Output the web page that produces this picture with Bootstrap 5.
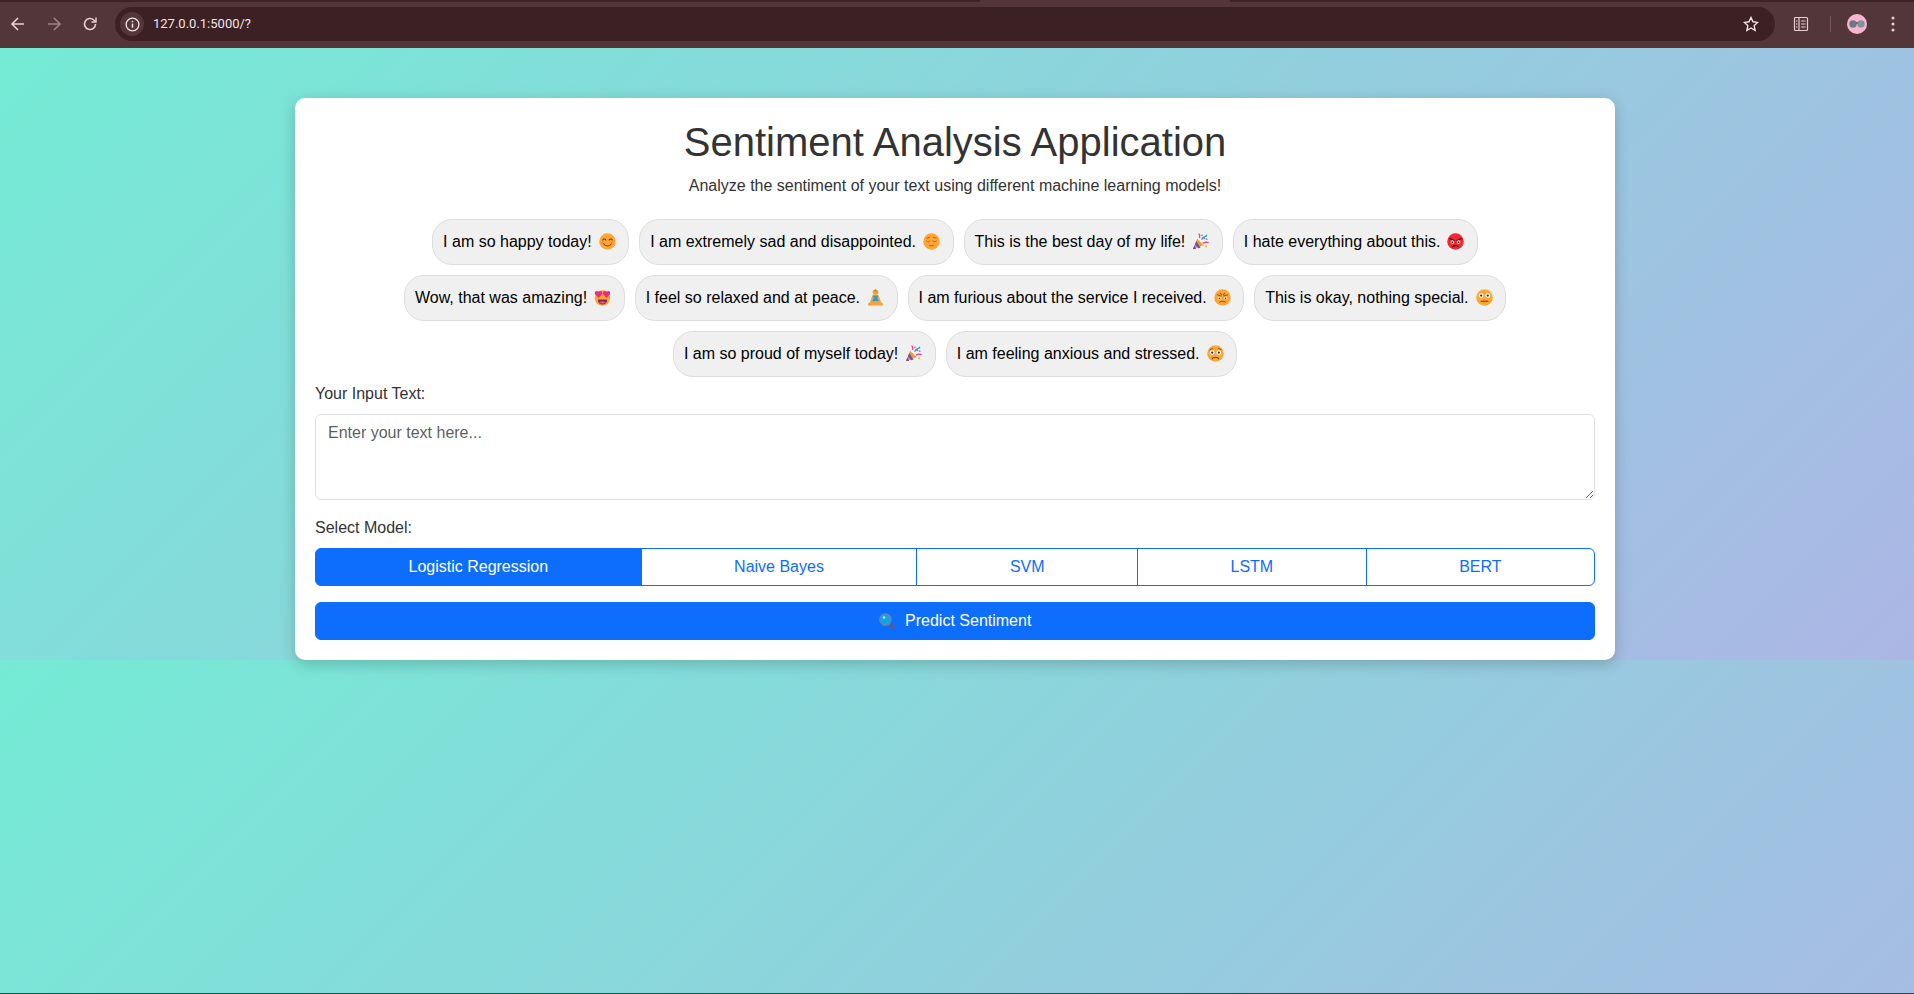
<!DOCTYPE html>
<html lang="en">
<head>
    <meta charset="UTF-8">
    <meta name="viewport" content="width=device-width, initial-scale=1.0">
    <title>Sentiment Analysis Application</title>
    <link href="https://cdn.jsdelivr.net/npm/bootstrap@5.3.0/dist/css/bootstrap.min.css" rel="stylesheet">
    <style>
        html, body {
            height: 100%;
        }
        body {
            font-family: "Liberation Sans", Arial, sans-serif;
            color: #333;
            overflow: hidden;
        }
        /* browser bar */
        .chrome-top {
            height: 2px;
            background-color: #3c2327;
        }
        .chrome-top-tab {
            width: 250px;
            height: 2px;
            margin-left: 980px;
            background-color: #533639;
        }
        .chrome-bar {
            height: 46px;
            padding: 0 3px 2px 0;
            background-color: #533639;
            color: #e8cfd2;
        }
        .chrome-btn {
            width: 36px;
            height: 36px;
        }
        .url-pill {
            height: 34px;
            padding-left: 5px;
            margin-left: 7px;
            border-radius: 17px;
            background-color: #3b2024;
            color: #f3e3e4;
            font-family: Roboto, "Liberation Sans", sans-serif;
            font-size: 13px;
        }
        .url-info {
            width: 24px;
            height: 24px;
            margin-right: 9px;
            border-radius: 50%;
            background-color: #533639;
        }
        .chrome-sep {
            width: 1px;
            height: 16px;
            margin: 0 16px 0 11px;
            background-color: #75595c;
        }
        /* page */
        .page-area {
            padding: 50px 4px 0 0;
            background: linear-gradient(135deg, #74ebd5, #acb6e5);
            background-size: 100% 612px;
        }
        .main-box {
            width: 1320px;
            padding: 20px;
            border-radius: 10px;
            background-color: #fff;
            box-shadow: 0 4px 15px rgba(0, 0, 0, 0.2);
        }
        .main-box h1 {
            font-size: 40px;
            line-height: 48px;
            color: #333;
        }
        .sample-chip {
            margin: 5px;
            padding: 10px;
            border: 1px solid #ddd;
            border-radius: 20px;
            background-color: #f0f0f0;
            color: #000;
            font-size: 16px;
            line-height: 24px;
        }
        .emo {
            width: 17px;
            height: 17px;
            margin: 0 2.5px 0 7px;
            vertical-align: -3px;
        }
        .btn-group .btn {
            font-size: 16px;
        }
        .search-emo {
            margin-right: 6px;
        }
        .page-end {
            height: 1px;
            background-color: #2d4444;
        }
    </style>
</head>
<body class="d-flex flex-column">

<svg width="0" height="0" class="d-block">
    <defs>
        <symbol id="e-smile" viewBox="0 0 36 36">
            <circle cx="18" cy="18" r="17.500" fill="#ffa632"/>
            <circle cx="7.500" cy="20" r="3.200" fill="#f98a5a"/>
            <circle cx="28.500" cy="20" r="3.200" fill="#f98a5a"/>
            <path d="M8 15c1.500-3 5-3 6.500 0M21.500 15c1.500-3 5-3 6.500 0M10 23c3 6 13 6 16 0" fill="none" stroke="#5a3a1c" stroke-width="2.200" stroke-linecap="round"/>
        </symbol>
        <symbol id="e-pensive" viewBox="0 0 36 36">
            <circle cx="18" cy="18" r="17.500" fill="#ffa632"/>
            <path d="M8 11l6-2M28 11l-6-2M8 17c2 2 5 2 7 0M21 17c2 2 5 2 7 0M14 27h8" fill="none" stroke="#a0662a" stroke-width="2" stroke-linecap="round"/>
        </symbol>
        <symbol id="e-party" viewBox="0 0 36 36">
            <path d="M2 34l9-22 14 14z" fill="#e2a13a"/>
            <path d="M5 26l4 8-7 0zM9 17l9 14-5 1.500-7-8z" fill="#7b4fa8"/>
            <path d="M21 13c3-5 7-4 10-8" fill="none" stroke="#18a0de" stroke-width="3" stroke-linecap="round"/>
            <path d="M24 21c3-2 6-2 10-1" fill="none" stroke="#ef4a8a" stroke-width="3" stroke-linecap="round"/>
            <path d="M16 9c1-3 0-5-1-7" fill="none" stroke="#ef4a8a" stroke-width="3" stroke-linecap="round"/>
            <circle cx="26" cy="11" r="2" fill="#ef4a8a"/>
            <circle cx="31" cy="13" r="2" fill="#3fb6c9"/>
            <circle cx="21" cy="5" r="2" fill="#3fb6c9"/>
            <circle cx="30" cy="28" r="2" fill="#f7b500"/>
        </symbol>
        <symbol id="e-angry" viewBox="0 0 36 36">
            <circle cx="18" cy="18" r="17.500" fill="#f2282e"/>
            <path d="M6 12l9 4M30 12l-9 4" stroke="#4a1012" stroke-width="3" stroke-linecap="round"/>
            <circle cx="11.500" cy="19" r="3.500" fill="#fff"/>
            <circle cx="24.500" cy="19" r="3.500" fill="#fff"/>
            <circle cx="11.500" cy="19.500" r="1.800" fill="#2d0c0e"/>
            <circle cx="24.500" cy="19.500" r="1.800" fill="#2d0c0e"/>
            <path d="M12 29c3-3 9-3 12 0" fill="none" stroke="#4a1012" stroke-width="2.500" stroke-linecap="round"/>
        </symbol>
        <symbol id="e-hearts" viewBox="0 0 36 36">
            <circle cx="18" cy="19" r="16.500" fill="#ffa632"/>
            <path d="M8 22h20c0 7-4 11-10 11s-10-4-10-11z" fill="#7c2a6c"/>
            <path d="M11 28c4-2 10-2 14 0-2 3.500-12 3.500-14 0z" fill="#f0567f"/>
            <path d="M9.500 19L2 10.500C0 6 5 1.500 9.500 6 14 1.500 19 6 17 10.500z" fill="#f0288c"/>
            <path d="M26.500 19L19 10.500C17 6 22 1.500 26.500 6 31 1.500 36 6 34 10.500z" fill="#f0288c"/>
        </symbol>
        <symbol id="e-lotus" viewBox="0 0 36 36">
            <circle cx="18" cy="7" r="6" fill="#f2a53c"/>
            <path d="M18 1c-2 0-3 2-3 4h6c0-2-1-4-3-4z" fill="#c57b1f"/>
            <path d="M12 13h12l2 14H10z" fill="#2f9fd0"/>
            <path d="M12 13c-3 5-4 11-6 15l4 1 4-10zM24 13c3 5 4 11 6 15l-4 1-4-10z" fill="#f2a53c"/>
            <path d="M2 33c0-4 6-7 16-7s16 3 16 7-8 2-16 2-16 2-16-2z" fill="#f2a53c"/>
        </symbol>
        <symbol id="e-furious" viewBox="0 0 36 36">
            <circle cx="18" cy="18" r="17.500" fill="#ffa632"/>
            <path d="M7 12l8 3M29 12l-8 3M13 9l3 3M23 9l-3 3M12 28c3-3 9-3 12 0" fill="none" stroke="#8a5a28" stroke-width="2.200" stroke-linecap="round"/>
            <circle cx="11.500" cy="19" r="2.800" fill="#fff"/>
            <circle cx="24.500" cy="19" r="2.800" fill="#fff"/>
            <circle cx="11.500" cy="19.500" r="1.500" fill="#3a2410"/>
            <circle cx="24.500" cy="19.500" r="1.500" fill="#3a2410"/>
        </symbol>
        <symbol id="e-neutral" viewBox="0 0 36 36">
            <circle cx="18" cy="18" r="17.500" fill="#ffa632"/>
            <circle cx="11" cy="14" r="5" fill="#fff"/>
            <circle cx="25" cy="14" r="5" fill="#fff"/>
            <circle cx="11" cy="14" r="2.400" fill="#3a2410"/>
            <circle cx="25" cy="14" r="2.400" fill="#3a2410"/>
            <path d="M11 26h14" stroke="#5a3a1c" stroke-width="2.400" stroke-linecap="round"/>
        </symbol>
        <symbol id="e-anxious" viewBox="0 0 36 36">
            <circle cx="18" cy="18" r="17.500" fill="#ffa632"/>
            <path d="M6 10l6-3M30 10l-6-3" stroke="#7a4c1e" stroke-width="2" stroke-linecap="round"/>
            <circle cx="11" cy="16" r="5" fill="#fff"/>
            <circle cx="25" cy="16" r="5" fill="#fff"/>
            <circle cx="11" cy="16" r="2.400" fill="#3a2410"/>
            <circle cx="25" cy="16" r="2.400" fill="#3a2410"/>
            <path d="M11 29c3-4 11-4 14 0" fill="none" stroke="#5a3a1c" stroke-width="2.400" stroke-linecap="round"/>
        </symbol>
    </defs>
</svg>

<div class="chrome-top flex-shrink-0"><div class="chrome-top-tab"></div></div>
<div class="chrome-bar d-flex align-items-center flex-shrink-0">
    <div class="chrome-btn d-flex align-items-center justify-content-center">
        <svg width="16" height="16" viewBox="0 0 16 16" fill="none" stroke="currentColor" stroke-width="1.600"><path d="M14 8H2.500M8 2L2 8l6 6"/></svg>
    </div>
    <div class="chrome-btn d-flex align-items-center justify-content-center opacity-50">
        <svg width="16" height="16" viewBox="0 0 16 16" fill="none" stroke="currentColor" stroke-width="1.600"><path d="M2 8h11.500M8 2l6 6-6 6"/></svg>
    </div>
    <div class="chrome-btn d-flex align-items-center justify-content-center">
        <svg width="16" height="16" viewBox="0 0 16 16" fill="none" stroke="currentColor" stroke-width="1.600"><path d="M13.500 8A5.500 5.500 0 1 1 11.800 4L13.500 5.500"/><path d="M14 1.500V6H9.500" stroke-width="1.400"/></svg>
    </div>
    <div class="url-pill d-flex align-items-center flex-grow-1">
        <div class="url-info d-flex align-items-center justify-content-center">
            <svg width="15" height="15" viewBox="0 0 16 16" fill="none" stroke="currentColor" stroke-width="1.400"><circle cx="8" cy="8" r="6.800"/><path d="M8 7v4.500" stroke-width="1.600"/><circle cx="8" cy="4.800" r="0.900" fill="currentColor" stroke="none"/></svg>
        </div>
        <span>127.0.0.1:5000/?</span>
        <svg class="ms-auto me-3" width="16" height="16" viewBox="0 0 16 16" fill="none" stroke="currentColor" stroke-width="1.400"><path d="M8 1.500l2 4.300 4.600.6-3.400 3.200.9 4.700L8 12l-4.100 2.300.9-4.700L1.400 6.400 6 5.800z"/></svg>
    </div>
    <div class="chrome-btn d-flex align-items-center justify-content-center ms-2">
        <svg width="16" height="16" viewBox="0 0 16 16" fill="none" stroke="currentColor" stroke-width="1.200"><rect x="1.500" y="1.500" width="13" height="13" rx="1"/><path d="M6 1.500v13M8 5h4.500M8 8h4.500M8 11h4.500M3 5h1.500M3 8h1.500M3 11h1.500"/></svg>
    </div>
    <div class="chrome-sep"></div>
    <svg width="20" height="20" viewBox="0 0 20 20">
        <circle cx="10" cy="10" r="10" fill="#fbb4cf"/>
        <circle cx="6" cy="10" r="3.700" fill="#6a7b7f"/>
        <circle cx="14" cy="10" r="3.700" fill="#7e9598"/>
        <path d="M9 9h2" stroke="#3b3b3b" stroke-width="1"/>
    </svg>
    <div class="chrome-btn d-flex align-items-center justify-content-center ms-2">
        <svg width="16" height="16" viewBox="0 0 16 16" fill="currentColor"><circle cx="8" cy="2" r="1.500"/><circle cx="8" cy="8" r="1.500"/><circle cx="8" cy="14" r="1.500"/></svg>
    </div>
</div>

<div class="page-area flex-grow-1">
    <div class="main-box mx-auto">
        <h1 class="text-center mb-2">Sentiment Analysis Application</h1>
        <p class="text-center mb-3">Analyze the sentiment of your text using different machine learning models!</p>

        <div class="d-flex flex-wrap justify-content-center">
            <button type="button" class="btn sample-chip">I am so happy today!<svg class="emo"><use href="#e-smile"/></svg></button>
            <button type="button" class="btn sample-chip">I am extremely sad and disappointed.<svg class="emo"><use href="#e-pensive"/></svg></button>
            <button type="button" class="btn sample-chip">This is the best day of my life!<svg class="emo"><use href="#e-party"/></svg></button>
            <button type="button" class="btn sample-chip">I hate everything about this.<svg class="emo"><use href="#e-angry"/></svg></button>
            <button type="button" class="btn sample-chip">Wow, that was amazing!<svg class="emo"><use href="#e-hearts"/></svg></button>
            <button type="button" class="btn sample-chip">I feel so relaxed and at peace.<svg class="emo"><use href="#e-lotus"/></svg></button>
            <button type="button" class="btn sample-chip">I am furious about the service I received.<svg class="emo"><use href="#e-furious"/></svg></button>
            <button type="button" class="btn sample-chip">This is okay, nothing special.<svg class="emo"><use href="#e-neutral"/></svg></button>
            <button type="button" class="btn sample-chip">I am so proud of myself today!<svg class="emo"><use href="#e-party"/></svg></button>
            <button type="button" class="btn sample-chip">I am feeling anxious and stressed.<svg class="emo"><use href="#e-anxious"/></svg></button>
        </div>

        <form>
            <div class="mb-3">
                <label for="inputText" class="form-label">Your Input Text:</label>
                <textarea id="inputText" class="form-control" rows="3" placeholder="Enter your text here..."></textarea>
            </div>
            <div class="mb-3">
                <label class="form-label">Select Model:</label>
                <div class="btn-group w-100" role="group">
                    <input type="radio" class="btn-check" name="model" id="m1" checked>
                    <label class="btn btn-outline-primary" for="m1">Logistic Regression</label>
                    <input type="radio" class="btn-check" name="model" id="m2">
                    <label class="btn btn-outline-primary" for="m2">Naive Bayes</label>
                    <input type="radio" class="btn-check" name="model" id="m3">
                    <label class="btn btn-outline-primary" for="m3">SVM</label>
                    <input type="radio" class="btn-check" name="model" id="m4">
                    <label class="btn btn-outline-primary" for="m4">LSTM</label>
                    <input type="radio" class="btn-check" name="model" id="m5">
                    <label class="btn btn-outline-primary" for="m5">BERT</label>
                </div>
            </div>
            <button type="button" class="btn btn-primary w-100">
                <svg width="16" height="16" viewBox="0 0 16 16" class="align-text-bottom search-emo">
                    <path d="M10 10l4.500 4.500" stroke="#5b5a94" stroke-width="3" stroke-linecap="round"/>
                    <circle cx="6.500" cy="6.500" r="5.700" fill="#10a5e4" stroke="#6a80b8" stroke-width="1.200"/>
                    <circle cx="5" cy="4.500" r="1.300" fill="#bfe8f7"/>
                </svg>
                Predict Sentiment
            </button>
        </form>
    </div>
</div>
<div class="page-end flex-shrink-0"></div>

<script src="https://cdn.jsdelivr.net/npm/bootstrap@5.3.0/dist/js/bootstrap.bundle.min.js"></script>
</body>
</html>
